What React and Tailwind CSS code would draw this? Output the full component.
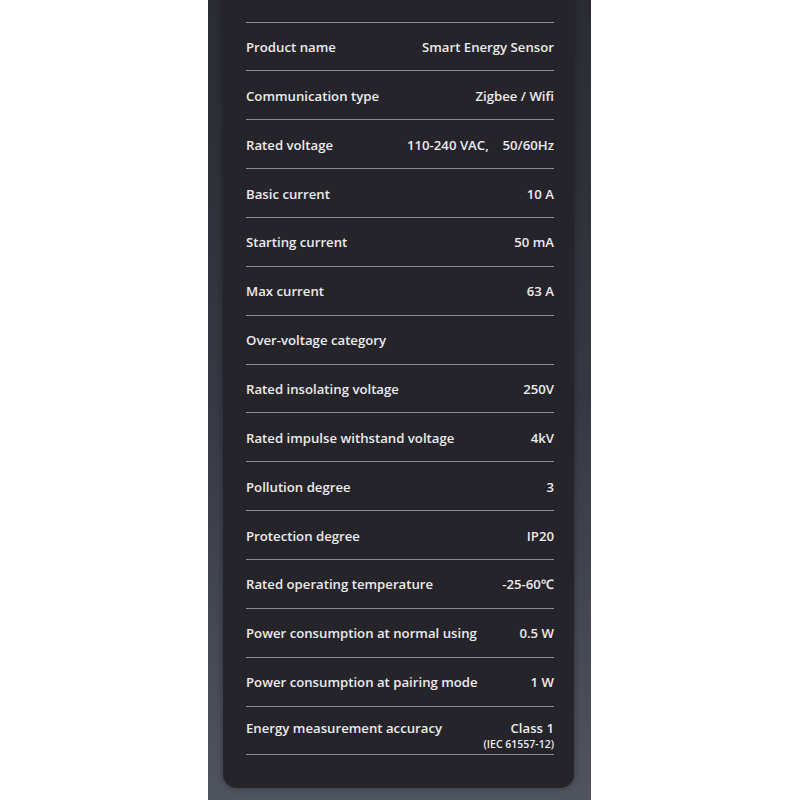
import React from "react";

const rows = [
  ["Product name", "Smart Energy Sensor"],
  ["Communication type", "Zigbee / Wifi"],
  ["Rated voltage", "110-240 VAC,    50/60Hz"],
  ["Basic current", "10 A"],
  ["Starting current", "50 mA"],
  ["Max current", "63 A"],
  ["Over-voltage category", ""],
  ["Rated insolating voltage", "250V"],
  ["Rated impulse withstand voltage", "4kV"],
  ["Pollution degree", "3"],
  ["Protection degree", "IP20"],
  ["Rated operating temperature", "-25-60℃"],
  ["Power consumption at normal using", "0.5 W"],
  ["Power consumption at pairing mode", "1 W"],
];

export default function App() {
  return (
    <div className="w-[800px] h-[800px] bg-white flex overflow-hidden" style={{ fontFamily: '"Open Sans", "Noto Sans", sans-serif' }}>
      <div className="ml-[208px] w-[383px] h-[800px] bg-gradient-to-b from-[#2a2b33] via-[#363943] to-[#4f545f] flex">
        <div className="ml-[15px] w-[351px] h-[788px] bg-[#25242b] rounded-b-[14px] pl-[23px] pr-[20px] pt-[21.5px] shadow-[0_0_6px_rgba(0,0,0,0.35)]">
          <div className="border-t-[1.5px] border-[#8c8c94]" />
          {rows.map(([k, v]) => (
            <div key={k} className="h-[48.87px] border-b-[1.5px] border-[#8c8c94] flex items-center justify-between text-[13.2px] font-semibold text-[#ebebeb] leading-[18px] pt-[1px]">
              <span>{k}</span>
              <span className="whitespace-pre">{v}</span>
            </div>
          ))}
          <div className="h-[48.87px] border-b-[1.5px] border-[#8c8c94] flex items-start justify-between pt-[12px] text-[13.2px] font-semibold text-[#ebebeb] leading-[18px]">
            <span>Energy measurement accuracy</span>
            <div className="flex flex-col items-end">
              <span>Class 1</span>
              <span className="text-[10.5px] leading-[14px]">(IEC 61557-12)</span>
            </div>
          </div>
        </div>
      </div>
    </div>
  );
}
